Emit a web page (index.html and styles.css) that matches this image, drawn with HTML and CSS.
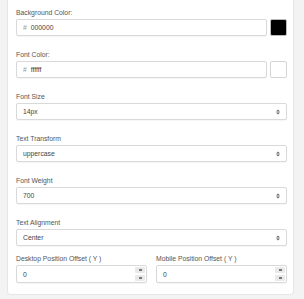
FILE: index.html
```html
<!DOCTYPE html>
<html lang="en">
<head>
    <meta charset="UTF-8">
    <meta name="viewport" content="width=device-width, initial-scale=1.0">
    <title>Style Settings</title>

    <link rel="stylesheet" href="styles.css">
</head>

<body>

    <div class="settings__card">

        <div class="field">
            <label class="field__label">Background Color:</label>
            <div class="color__row">
                <div class="field__input color__input"><span class="color__hash">#</span>000000</div>
                <div class="color__swatch swatch--black"></div>
            </div>
        </div>

        <div class="field">
            <label class="field__label">Font Color:</label>
            <div class="color__row">
                <div class="field__input color__input"><span class="color__hash">#</span>ffffff</div>
                <div class="color__swatch swatch--white"></div>
            </div>
        </div>

        <div class="field">
            <label class="field__label">Font Size</label>
            <div class="field__input field__select">14px
                <svg class="select__arrow" width="4" height="6" viewBox="0 0 4 6"><path d="M0 2.5 L2 0.5 L4 2.5 Z M0 3.5 L2 5.5 L4 3.5 Z" fill="#666"/></svg>
            </div>
        </div>

        <div class="field">
            <label class="field__label">Text Transform</label>
            <div class="field__input field__select">uppercase
                <svg class="select__arrow" width="4" height="6" viewBox="0 0 4 6"><path d="M0 2.5 L2 0.5 L4 2.5 Z M0 3.5 L2 5.5 L4 3.5 Z" fill="#666"/></svg>
            </div>
        </div>

        <div class="field">
            <label class="field__label">Font Weight</label>
            <div class="field__input field__select">700
                <svg class="select__arrow" width="4" height="6" viewBox="0 0 4 6"><path d="M0 2.5 L2 0.5 L4 2.5 Z M0 3.5 L2 5.5 L4 3.5 Z" fill="#666"/></svg>
            </div>
        </div>

        <div class="field field--tight">
            <label class="field__label">Text Alignment</label>
            <div class="field__input field__select">Center
                <svg class="select__arrow" width="4" height="6" viewBox="0 0 4 6"><path d="M0 2.5 L2 0.5 L4 2.5 Z M0 3.5 L2 5.5 L4 3.5 Z" fill="#666"/></svg>
            </div>
        </div>

        <div class="field__pair">
            <div class="field">
                <label class="field__label">Desktop Position Offset ( Y )</label>
                <div class="field__input field__number">0
                    <div class="spinner">
                        <span class="spinner__btn"><i></i></span>
                        <span class="spinner__btn"><i></i></span>
                    </div>
                </div>
            </div>
            <div class="field">
                <label class="field__label">Mobile Position Offset ( Y )</label>
                <div class="field__input field__number">0
                    <div class="spinner">
                        <span class="spinner__btn"><i></i></span>
                        <span class="spinner__btn"><i></i></span>
                    </div>
                </div>
            </div>
        </div>

    </div>

</body>
</html>
```

FILE: styles.css
```css
body {
    margin: 0;
    background-color: #f3f3f3;
    font-family: "Liberation Sans", Arial, sans-serif;
    font-size: 6.8px;
    color: #444;
}

.settings__card {
    width: 287px;
    margin-left: 7px;
    box-sizing: border-box;
    background-color: #fff;
    border-radius: 0 0 4px 4px;
    border: 1px solid #e6e6e6;
    border-top: none;
    padding: 8px 6px 11px 8px;
}

.field {
    display: flex;
    flex-direction: column;
    gap: 2px;
    margin-bottom: 14px;
}

.field--tight {
    margin-bottom: 8px;
}

.field__label {
    line-height: 9px;
    color: #555;
}

.field__input {
    height: 17px;
    box-sizing: border-box;
    border: 1px solid #d9d9d9;
    border-radius: 2px;
    padding: 0 6px;
    display: flex;
    align-items: center;
    background-color: #fff;
    box-shadow: 0 1px 1px rgba(0, 0, 0, 0.04);
}

.color__row {
    display: flex;
    gap: 3px;
}

.color__input {
    flex: 1;
}

.color__hash {
    color: #999;
    margin-right: 4px;
}

.color__swatch {
    width: 17px;
    height: 17px;
    box-sizing: border-box;
    border-radius: 2px;
    border: 1px solid #d5d5d5;
}

.swatch--black {
    background-color: #000;
    border-color: #bbb;
}

.swatch--white {
    background-color: #fff;
}

.field__select {
    justify-content: space-between;
    padding-right: 6px;
}

.select__arrow {
    display: block;
}

.field__pair {
    display: grid;
    grid-template-columns: 1fr 1fr;
    gap: 9px;
}

.field__pair .field {
    margin-bottom: 0;
}

.field__number {
    height: 18px;
    justify-content: space-between;
    padding-right: 1px;
}

.spinner {
    display: flex;
    flex-direction: column;
    gap: 2px;
}

.spinner__btn {
    width: 10px;
    height: 6px;
    background-color: #e9e9e9;
    border-radius: 1px;
    display: flex;
    align-items: center;
    justify-content: center;
}

.spinner__btn i {
    width: 3px;
    height: 2px;
    background-color: #777;
}
```
